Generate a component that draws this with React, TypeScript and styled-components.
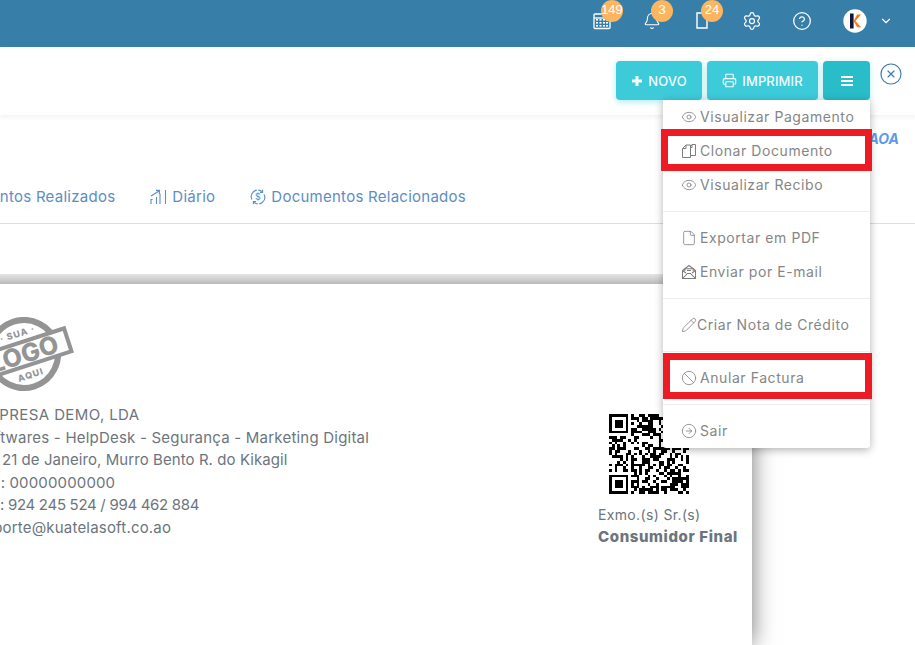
import React from "react";
import styled, { createGlobalStyle } from "styled-components";
import { Eye, File, Pencil, Ban, CircleArrowRight, CircleX, Printer, Settings, CircleHelp, Bell, ChevronDown } from "lucide-react";

const Global = createGlobalStyle`
  html, body { margin: 0; padding: 0; background: #fff; }
  body { font-family: Inter, "Open Sans", "Liberation Sans", sans-serif; }
`;

const Page = styled.div`
  position: relative;
  width: 915px;
  height: 645px;
  overflow: hidden;
  background: #fff;
  display: flex;
  flex-direction: column;
`;

const TopBar = styled.header`
  height: 47px;
  flex: none;
  background: #377fa9;
  display: flex;
  align-items: center;
  justify-content: flex-end;
  padding: 0 22px 6px 0;
  box-sizing: border-box;
  color: #fff;
`;

const IconSlot = styled.div`
  position: relative;
  width: 50px;
  height: 24px;
  display: flex;
  align-items: center;
  justify-content: center;
`;

const Badge = styled.span`
  position: absolute;
  left: 24px;
  top: -9px;
  width: 22px;
  height: 22px;
  border-radius: 50%;
  background: #fdb55f;
  color: #fff;
  font-family: "Liberation Sans", Arial, sans-serif;
  font-size: 13px;
  line-height: 20px;
  display: flex;
  justify-content: center;
`;

const Avatar = styled.svg`
  width: 24px;
  height: 24px;
  margin-left: 16px;
  flex: none;
`;

const Caret = styled(ChevronDown)`
  margin-left: 12px;
  flex: none;
`;

const Toolbar = styled.div`
  height: 68px;
  flex: none;
  box-sizing: border-box;
  display: flex;
  justify-content: flex-end;
  align-items: flex-start;
  gap: 5px;
  padding: 14px 12px 0 0;
  background: #fff;
  box-shadow: 0 2px 5px rgba(0, 0, 0, 0.06);
`;

const ActionButton = styled.button<{ $dark?: boolean; $w: number }>`
  width: ${(p) => p.$w}px;
  height: 39px;
  border: 0;
  border-radius: 4px;
  background: ${(p) => (p.$dark ? "#29bcc9" : "#3dcbda")};
  box-shadow: 0 2px 6px rgba(61, 203, 218, 0.4);
  color: #f2fbfc;
  font-family: inherit;
  font-size: 13px;
  font-weight: 500;
  letter-spacing: 0.1px;
  display: flex;
  align-items: center;
  justify-content: center;
  gap: 5px;
  padding: 0;
`;

const CloseButton = styled(CircleX)`
  color: #3d7db8;
  margin: 1px 0 0 4px;
  flex: none;
`;

const Summary = styled.section`
  height: 109px;
  flex: none;
  box-sizing: border-box;
  border-bottom: 1px solid #dedede;
  display: flex;
  flex-direction: column;
`;

const Currency = styled.div`
  align-self: flex-end;
  margin: 15px 16px 0 0;
  font-size: 14px;
  line-height: 17px;
  font-weight: 700;
  font-style: italic;
  color: #5c9be3;
`;

const Tabs = styled.nav`
  margin-top: 41px;
  display: flex;
  justify-content: flex-end;
  gap: 35px;
  padding-right: 449px;
  white-space: nowrap;
`;

const Tab = styled.a`
  flex: none;
  display: flex;
  align-items: center;
  gap: 5px;
  color: #5d8dc4;
  font-size: 15px;
  letter-spacing: 0.26px;
  line-height: 18px;
`;

const PaperClip = styled.div`
  margin-top: 50px;
  padding-top: 10px;
  flex: 1;
  overflow: hidden;
  display: flex;
`;

const Paper = styled.article`
  margin: 0 163px 0 -40px;
  flex: 1;
  background: #fff;
  box-shadow: 0 0 22px rgba(0, 0, 0, 0.55);
  display: flex;
  justify-content: space-between;
  padding: 33px 15px 0 16px;
  color: #6c757d;
`;

const Company = styled.div`
  display: flex;
  flex-direction: column;
  white-space: nowrap;
`;

const Logo = styled.svg`
  width: 100px;
  height: 76px;
  margin: 0 0 11px 3px;
`;

const CompanyLine = styled.div<{ $ls: number }>`
  font-size: 15px;
  line-height: 22.6px;
  letter-spacing: ${(p) => p.$ls}px;
`;

const Client = styled.div`
  width: 139px;
  margin-top: 97px;
  display: flex;
  flex-direction: column;
`;

const Qr = styled.svg`
  width: 80px;
  height: 80px;
  margin: 0 0 10px 11px;
`;

const ClientLabel = styled.div`
  font-size: 14px;
  line-height: 22px;
  white-space: nowrap;
  letter-spacing: 0.35px;
`;

const ClientName = styled(ClientLabel)`
  font-size: 15px;
  font-weight: 800;
  letter-spacing: 0.6px;
`;

const Menu = styled.div`
  position: absolute;
  left: 663px;
  top: 100px;
  width: 207px;
  background: #fff;
  border-radius: 0 0 3px 3px;
  box-shadow: 0 2px 8px rgba(0, 0, 0, 0.3);
  display: flex;
  flex-direction: column;
`;

const MenuItem = styled.div<{ $tight?: boolean }>`
  position: relative;
  height: 34px;
  box-sizing: border-box;
  padding: 0 0 1px 18px;
  display: flex;
  align-items: center;
  gap: ${(p) => (p.$tight ? 0 : 3)}px;
  color: #868686;
  font-size: 14px;
  letter-spacing: 0.57px;
  white-space: nowrap;
`;

const MenuDivider = styled.div`
  height: 1px;
  margin: 9px 0;
  background: #eeeeee;
`;

const Highlight = styled.span<{ $t: number; $b: number; $l: number }>`
  position: absolute;
  top: ${(p) => p.$t}px;
  bottom: ${(p) => p.$b}px;
  left: ${(p) => p.$l}px;
  right: -2px;
  border: 7px solid #ed1c24;
`;

const qrSize = 29;
const qrCells: [number, number][] = (() => {
  const out: [number, number][] = [];
  let s = 20240611;
  const next = () => {
    s = (s * 1664525 + 1013904223) >>> 0;
    return (s >>> 16) / 65536;
  };
  const inBox = (x: number, y: number, bx: number, by: number) =>
    x >= bx && x < bx + 8 && y >= by && y < by + 8;
  const finder = (x: number, y: number, ox: number, oy: number) => {
    const a = x - ox, b = y - oy;
    if (a < 0 || b < 0 || a > 6 || b > 6) return false;
    return a === 0 || a === 6 || b === 0 || b === 6 || (a >= 2 && a <= 4 && b >= 2 && b <= 4);
  };
  for (let y = 0; y < qrSize; y++) {
    for (let x = 0; x < qrSize; x++) {
      const r = next();
      let on: boolean;
      if (inBox(x, y, 0, 0) || inBox(x, y, qrSize - 8, 0) || inBox(x, y, 0, qrSize - 8)) {
        on = finder(x, y, 0, 0) || finder(x, y, qrSize - 7, 0) || finder(x, y, 0, qrSize - 7);
      } else {
        on = r > 0.47;
      }
      if (on) out.push([x, y]);
    }
  }
  return out;
})();

const ico = { size: 16, strokeWidth: 1.25 };

function CalendarIcon() {
  return (
    <svg width="18" height="18" viewBox="0 0 18 18" fill="none" stroke="#fff" strokeWidth="1.3">
      <rect x="1" y="2" width="16" height="14.5" rx="1" />
      <path d="M1 6h16" />
      <g stroke="none" fill="#fff">
        {[4, 7.5, 11, 14].flatMap((x) => [8, 11, 14].map((y) => <rect key={x + "-" + y} x={x - 1} y={y - 1} width="2" height="1.6" />))}
      </g>
    </svg>
  );
}

function DocIcon() {
  return (
    <svg width="12" height="17" viewBox="0 0 12 17" fill="none" stroke="#fff" strokeWidth="1.4">
      <path d="M1 1h10v15H1z" />
    </svg>
  );
}

function ChartIcon() {
  return (
    <svg width="17" height="16" viewBox="0 0 17 16" fill="none" stroke="#5d8dc4" strokeWidth="1.1">
      <path d="M1 15v-4.500h1.600M6.500 15V8M10 15V4.500M15.500 15V1" />
      <path d="M1 7l8-5M9.400 5V1.400H6" />
    </svg>
  );
}

function RelatedIcon() {
  return (
    <svg width="16" height="16" viewBox="0 0 16 16" fill="none" stroke="#5d8dc4" strokeWidth="1.1">
      <path d="M2 10.500A6.500 6.500 0 0 1 12 2.600M14 5.500A6.500 6.500 0 0 1 4 13.400" strokeDasharray="12 1.500" />
      <path d="M12.600 .8v2.600H10M3.400 15.200v-2.600H6" />
      <text x="8" y="11.200" textAnchor="middle" fontSize="9" fontFamily="Inter, sans-serif" fill="#5d8dc4" stroke="none">$</text>
    </svg>
  );
}

function CloneIcon() {
  return (
    <svg width="16" height="16" viewBox="0 0 16 16" fill="none" stroke="#7d7d7d" strokeWidth="1">
      <path d="M1.500 5.500L5 2h4.500v12.500h-8z" />
      <path d="M1.500 5.500H5V2" />
      <path d="M9.500 3.500L11 1.500h3.500v11h-5" />
      <path d="M11 1.500v3H9.500" />
    </svg>
  );
}

function MailIcon() {
  return (
    <svg width="16" height="16" viewBox="0 0 16 16" fill="none" stroke="#7d7d7d" strokeWidth="1.05">
      <path d="M1.500 6.500V14.500h13V6.500L8 1.500z" />
      <path d="M1.500 14.500L6.500 9.500h3l5 5" />
      <path d="M1.500 6.500L5 9M14.500 6.500L11 9" />
      <path d="M3.800 7V4.700h8.400V7M6 6.500h4" />
    </svg>
  );
}

export default function App() {
  return (
    <Page>
      <Global />
      <TopBar>
        <IconSlot><CalendarIcon /><Badge>149</Badge></IconSlot>
        <IconSlot><Bell size={18} strokeWidth={1.5} /><Badge>3</Badge></IconSlot>
        <IconSlot><DocIcon /><Badge>24</Badge></IconSlot>
        <IconSlot><Settings size={20} strokeWidth={1.5} /></IconSlot>
        <IconSlot><CircleHelp size={20} strokeWidth={1.5} /></IconSlot>
        <Avatar viewBox="0 0 24 24">
          <circle cx="12" cy="12" r="11.700" fill="#fff" />
          <rect x="7" y="4.500" width="3.600" height="15" fill="#12163f" />
          <path d="M18 5.500l-5.600 6.400 5.600 6.400h-3.800L10.600 12l3.600-6.500z" fill="#f47b16" />
        </Avatar>
        <Caret size={14} strokeWidth={2} />
      </TopBar>

      <Toolbar>
        <ActionButton $w={86}>
          <svg width="12" height="12" viewBox="0 0 12 12" fill="#f2fbfc"><path d="M4.500 1h3v3.500H11v3H7.500V11h-3V7.500H1v-3h3.500z" /></svg>
          NOVO
        </ActionButton>
        <ActionButton $w={111}><Printer size={15} strokeWidth={1.8} />IMPRIMIR</ActionButton>
        <ActionButton $w={47} $dark>
          <svg width="12" height="10" viewBox="0 0 12 10" fill="#fff"><path d="M0 0h12v2H0zM0 4h12v2H0zM0 8h12v2H0z" /></svg>
        </ActionButton>
        <CloseButton size={24} strokeWidth={1.15} />
      </Toolbar>

      <Summary>
        <Currency>AOA</Currency>
        <Tabs>
          <Tab>Pagamentos Realizados</Tab>
          <Tab><ChartIcon />Diário</Tab>
          <Tab><RelatedIcon />Documentos Relacionados</Tab>
        </Tabs>
      </Summary>

      <PaperClip>
        <Paper>
          <Company>
            <Logo viewBox="0 0 100 76">
              <g transform="translate(45 37) rotate(-18)" fontFamily="Inter, sans-serif" fontWeight="800" fill="#949494" textAnchor="middle">
                <circle r="34" fill="none" stroke="#949494" strokeWidth="6" />
                <rect x="-46" y="-12" width="92" height="24" fill="#fff" stroke="#949494" strokeWidth="4" />
                <text y="9" fontSize="25">LOGO</text>
                <text y="-18" fontSize="9" letterSpacing="1">· SUA ·</text>
                <text y="25" fontSize="9" letterSpacing="1">AQUI</text>
              </g>
            </Logo>
            <CompanyLine $ls={0.39}>EMPRESA DEMO, LDA</CompanyLine>
            <CompanyLine $ls={0.21}>Softwares - HelpDesk - Segurança - Marketing Digital</CompanyLine>
            <CompanyLine $ls={0.07}>Av. 21 de Janeiro, Murro Bento R. do Kikagil</CompanyLine>
            <CompanyLine $ls={0.15}>NIF: 00000000000</CompanyLine>
            <CompanyLine $ls={-0.3}>Tel.: 924 245 524 / 994 462 884</CompanyLine>
            <CompanyLine $ls={0.19}>suporte@kuatelasoft.co.ao</CompanyLine>
          </Company>
          <Client>
            <Qr viewBox={`0 0 ${qrSize} ${qrSize}`} shapeRendering="crispEdges">
              {qrCells.map(([x, y]) => <rect key={x + "_" + y} x={x} y={y} width="1" height="1" fill="#000" />)}
            </Qr>
            <ClientLabel>Exmo.(s) Sr.(s)</ClientLabel>
            <ClientName>Consumidor Final</ClientName>
          </Client>
        </Paper>
      </PaperClip>

      <Menu>
        <MenuItem><Eye {...ico} />Visualizar Pagamento</MenuItem>
        <MenuItem><CloneIcon />Clonar Documento<Highlight $t={-5} $b={-3} $l={-2} /></MenuItem>
        <MenuItem><Eye {...ico} />Visualizar Recibo</MenuItem>
        <MenuDivider />
        <MenuItem><File {...ico} />Exportar em PDF</MenuItem>
        <MenuItem><MailIcon />Enviar por E-mail</MenuItem>
        <MenuDivider />
        <MenuItem $tight><Pencil {...ico} />Criar Nota de Crédito</MenuItem>
        <MenuDivider />
        <MenuItem><Ban {...ico} />Anular Factura<Highlight $t={-8} $b={-4} $l={0} /></MenuItem>
        <MenuDivider />
        <MenuItem><CircleArrowRight {...ico} />Sair</MenuItem>
      </Menu>
    </Page>
  );
}
